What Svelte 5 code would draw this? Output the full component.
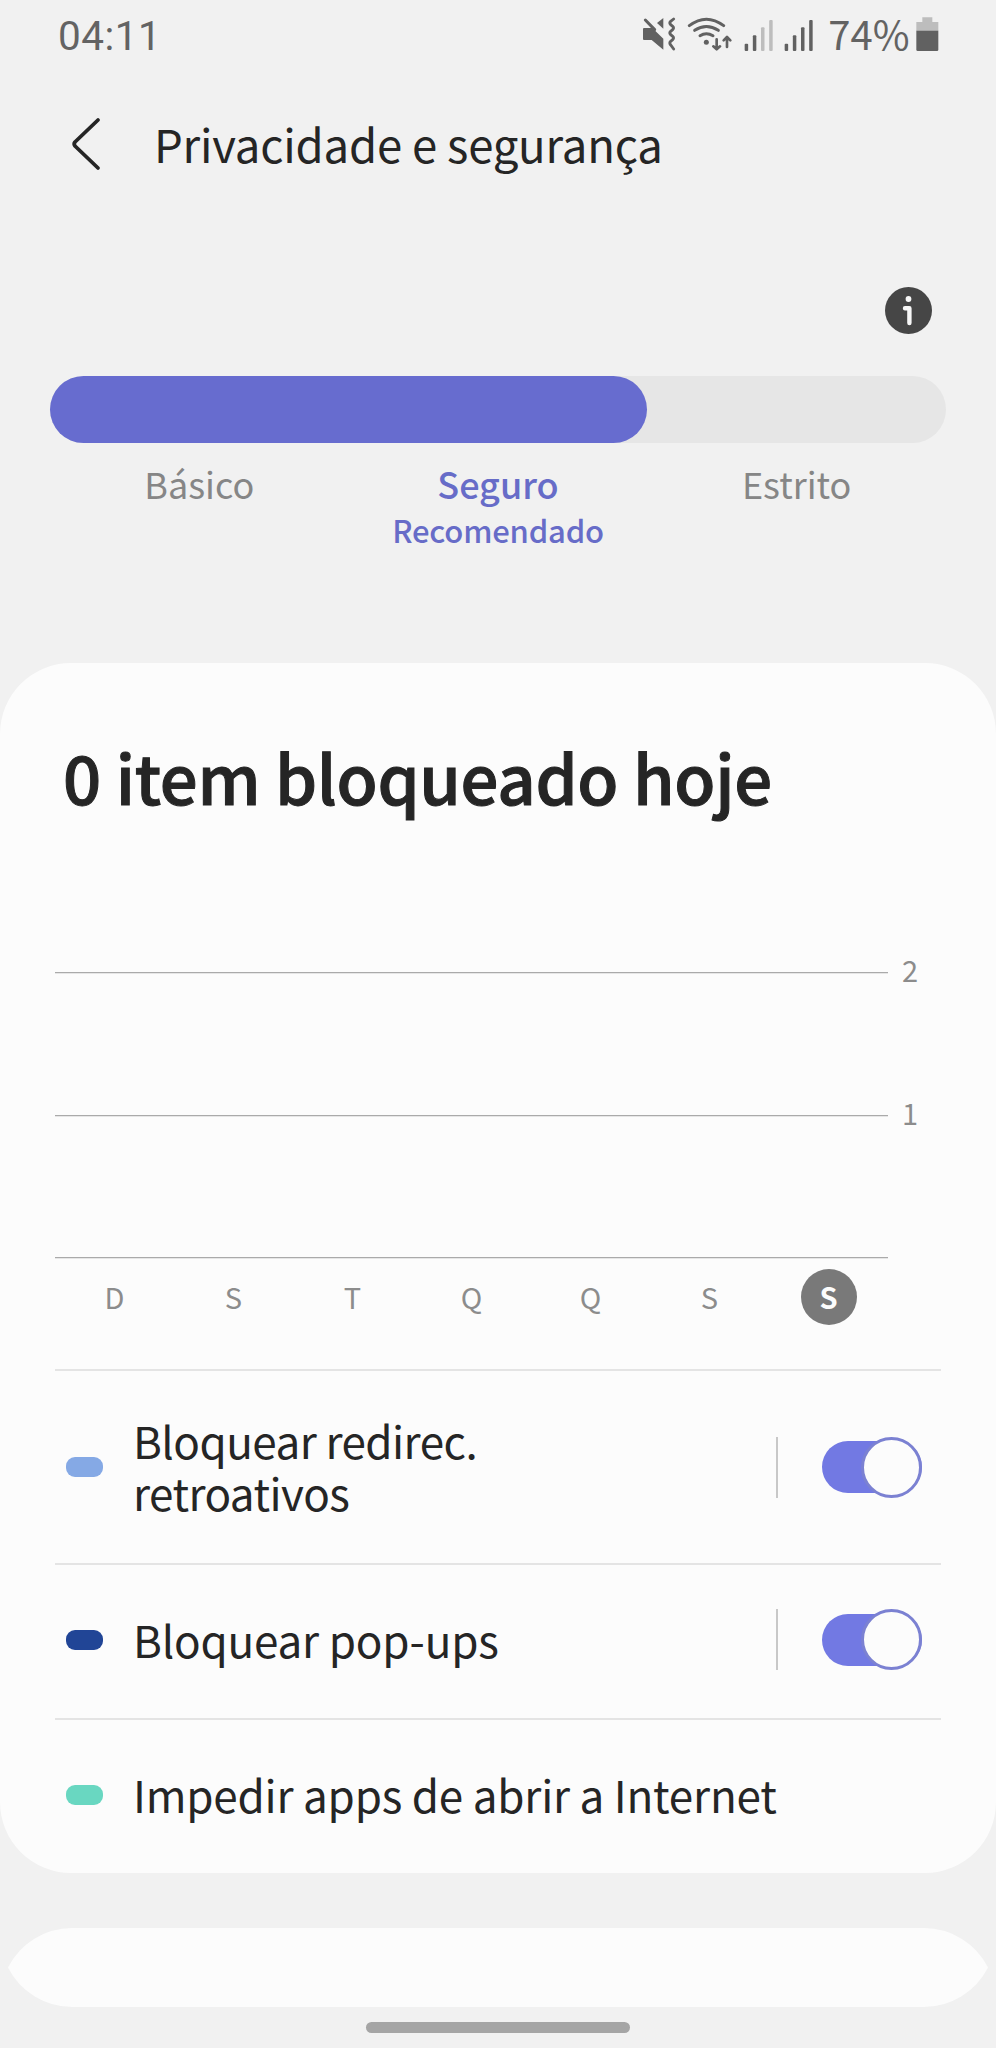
<script lang="ts">
  interface BlockRule {
    id: string;
    lines: string[];
    color: string;
    toggle: boolean;
  }

  const levels = [
    { name: "Básico", hint: "" },
    { name: "Seguro", hint: "Recomendado" },
    { name: "Estrito", hint: "" },
  ];
  const days = ["D", "S", "T", "Q", "Q", "S", "S"];
  const today = 6;

  const rules: BlockRule[] = [
    { id: "redirects", lines: ["Bloquear redirec.", "retroativos"], color: "#85a9e5", toggle: true },
    { id: "popups", lines: ["Bloquear pop-ups"], color: "#214596", toggle: true },
    { id: "apps", lines: ["Impedir apps de abrir a Internet"], color: "#69d7c1", toggle: false },
  ];

  let level = $state(1);
  let blocked = $state(0);
  let enabled: Record<string, boolean> = $state({ redirects: true, popups: true });

  const fill = $derived(((level + 1) / levels.length) * 100);
</script>

{#snippet signal(strength: number)}
  <svg class="status-icon" width="29.33" height="35.33" viewBox="370 48 88 106">
    {#each [131, 106, 82, 60] as top, i}
      <rect x={372 + i * 24.5} y={top} width="10.5" height={153 - top} rx="3" fill={i < strength ? "#616161" : "#bdbdbd"} />
    {/each}
  </svg>
{/snippet}

<div class="screen">
  <div class="status-bar">
    <span class="clock">04:11</span>
    <div class="status-icons">
      <svg class="status-icon" width="34" height="35.33" viewBox="66 48 102 106">
        <path d="M72 84H97L130 116V149L95 120H72Q69 120 69 117V87Q69 84 72 84Z" fill="#616161" />
        <path d="M130 54V86L111 69Z" fill="#616161" />
        <path d="M76 60L104 89" stroke="#616161" stroke-width="9" stroke-linecap="round" />
        <path
          d="M161 57L152 64Q147 69 152 74L158 79Q163 84 158 89L152 94Q147 99 152 104L158 109Q163 114 158 119L152 124Q147 129 152 135L161 147"
          fill="none"
          stroke="#616161"
          stroke-width="8.5"
          stroke-linecap="round"
        />
      </svg>
      <svg class="status-icon" width="45.33" height="35.33" viewBox="202 48 136 106">
        <g fill="none" stroke="#616161" stroke-width="9" stroke-linecap="round" stroke-linejoin="round">
          <path d="M209 77Q260 38 312 77" />
          <path d="M225 91Q260 68 296 91" />
          <path d="M241 107Q260 95 280 107" />
          <path d="M291 118V147M281 139L291 148L301 139" stroke-width="8" />
          <path d="M322 141V111M312 121L322 111L332 121" stroke-width="8" />
        </g>
        <circle cx="260" cy="127" r="7.5" fill="#616161" />
      </svg>
      {@render signal(2)}
      {@render signal(4)}
      <span class="percent">74%</span>
      <svg width="22.67" height="35.33" viewBox="890 48 68 106">
        <path d="M909 52H939V66H957V93H891V66H909Z" fill="#bdbdbd" />
        <path d="M891 92H957V149Q957 153 953 153H895Q891 153 891 149Z" fill="#616161" />
      </svg>
    </div>
  </div>

  <header class="app-bar">
    <button class="back" aria-label="Voltar">
      <svg width="32" height="54" viewBox="0 0 32 54">
        <path d="M28 3L5 25Q3.4 27 5 29L28 51" fill="none" />
      </svg>
    </button>
    <h1>Privacidade e segurança</h1>
  </header>

  <section class="level">
    <button class="info" aria-label="Informações">
      <svg width="47" height="47" viewBox="0 0 47 47">
        <circle cx="23.5" cy="23.5" r="23.5" fill="#464646" />
        <circle cx="23.5" cy="12" r="2.9" fill="#f7f7f7" />
        <path d="M20 21.2H24.4V36" fill="none" stroke="#f7f7f7" stroke-width="4.4" stroke-linecap="round" stroke-linejoin="round" />
      </svg>
    </button>
    <div class="track">
      <div class="track-fill" style="width: {fill}%"></div>
    </div>
    <div class="level-names">
      {#each levels as item, i}
        <button class="level-name" class:active={level === i} onclick={() => (level = i)}>
          <span>{item.name}</span>
          {#if item.hint}
            <small>{item.hint}</small>
          {/if}
        </button>
      {/each}
    </div>
  </section>

  <section class="card">
    <h2>{blocked} item bloqueado hoje</h2>

    <div class="chart">
      {#each [2, 1] as value}
        <div class="grid-row">
          <div class="grid-line"></div>
          <span class="grid-value">{value}</span>
        </div>
      {/each}
      <div class="grid-line base"></div>
      <div class="days">
        {#each days as day, i}
          <span class="day" class:today={i === today}>{day}</span>
        {/each}
      </div>
    </div>

    {#each rules as rule (rule.id)}
      <div class="rule" class:tall={rule.lines.length > 1}>
        <span class="swatch" style="background: {rule.color}"></span>
        <div class="rule-name">
          {#each rule.lines as line}
            <div>{line}</div>
          {/each}
        </div>
        {#if rule.toggle}
          <span class="separator"></span>
          <button
            class="switch"
            class:on={enabled[rule.id]}
            role="switch"
            aria-checked={enabled[rule.id]}
            aria-label={rule.lines.join(" ")}
            onclick={() => (enabled[rule.id] = !enabled[rule.id])}
          >
            <span class="knob"></span>
          </button>
        {/if}
      </div>
    {/each}
  </section>

  <svg class="next-card" width="996" height="79" viewBox="0 0 996 79">
    <path d="M8 39.5A72 72 0 0 1 72 0H924A72 72 0 0 1 988 39.5A72 72 0 0 1 924 79H72A72 72 0 0 1 8 39.5Z" />
  </svg>

  <div class="home-handle"></div>
</div>

<style>
  :global(body) {
    background: #f1f1f1;
  }

  .screen {
    width: 996px;
    height: 2048px;
    overflow: hidden;
    background: #f1f1f1;
    color: #252525;
    font-family: "Noto Sans CJK JP", "Noto Sans", sans-serif;
  }

  button {
    display: block;
    margin: 0;
    padding: 0;
    border: none;
    background: none;
    color: inherit;
    font: inherit;
    cursor: pointer;
  }

  svg {
    display: block;
  }

  .status-bar {
    height: 67px;
    padding: 0 57px 0 58px;
    display: flex;
    align-items: center;
    justify-content: space-between;
    color: #636363;
    font-size: 40px;
    line-height: 48px;
  }

  .clock {
    padding-top: 5px;
    font-family: Roboto, sans-serif;
    font-size: 40.5px;
    letter-spacing: 0.5px;
  }

  .status-icons {
    display: flex;
    align-items: center;
  }

  .status-icon {
    margin-right: 11px;
  }

  .percent {
    width: 88px;
    margin-left: 4px;
    padding-bottom: 2px;
  }

  .app-bar {
    height: 154px;
    padding-left: 70px;
    display: flex;
    align-items: center;
  }

  .back path {
    stroke: #252525;
    stroke-width: 3.8;
    stroke-linecap: round;
    stroke-linejoin: round;
  }

  h1 {
    margin: 0 0 3px 52px;
    font-size: 45.5px;
    line-height: 60px;
    font-weight: 400;
    letter-spacing: -0.2px;
  }

  .level {
    height: 442px;
    box-sizing: border-box;
    padding: 66px 50px 0;
  }

  .info {
    margin: 0 14px 42px auto;
  }

  .track {
    height: 66.5px;
    border-radius: 34px;
    background: #e6e6e6;
  }

  .track-fill {
    height: 100%;
    border-radius: 34px;
    background: #676ccf;
  }

  .level-names {
    display: grid;
    grid-template-columns: repeat(3, 1fr);
    align-items: start;
    padding-top: 16.5px;
  }

  .level-name {
    color: #868686;
    font-size: 36px;
    line-height: 48px;
    text-align: center;
  }

  .level-name.active {
    color: #676cc8;
    font-weight: 500;
  }

  .level-name span,
  .level-name small {
    display: block;
  }

  .level-name small {
    margin-top: 2px;
    font-size: 31px;
    line-height: 42px;
    letter-spacing: -0.2px;
  }

  .card {
    height: 1210px;
    box-sizing: border-box;
    padding: 68px 55px 0;
    border-radius: 71px;
    background: #fcfcfc;
  }

  h2 {
    margin: 0 0 0 8px;
    font-size: 67px;
    line-height: 90px;
    font-weight: 500;
    letter-spacing: -0.3px;
    white-space: nowrap;
    -webkit-text-stroke: 1px #252525;
  }

  .chart {
    height: 548px;
    box-sizing: border-box;
    padding-top: 131px;
    color: #8c8c8c;
    font-size: 29px;
    line-height: 40px;
  }

  .grid-row {
    height: 41px;
    margin-bottom: 102px;
    display: flex;
    align-items: center;
  }

  .grid-line {
    width: 833px;
    height: 1px;
    background: #aaaaaa;
    box-shadow: 0 1px #e6e6e6;
  }

  .grid-line.base {
    margin-top: 121px;
  }

  .grid-value {
    width: 44px;
    padding-bottom: 7px;
    text-align: center;
  }

  .days {
    width: 833px;
    margin-top: 11px;
    display: grid;
    grid-template-columns: repeat(7, 1fr);
    justify-items: center;
  }

  .day {
    width: 56px;
    height: 56px;
    border-radius: 50%;
    line-height: 55px;
    text-align: center;
  }

  .day.today {
    background: #797979;
    color: #fcfcfc;
    font-weight: 700;
  }

  .rule {
    height: 155px;
    box-sizing: border-box;
    border-top: 2px solid #e4e4e4;
    padding: 0 19px 4px 11px;
    display: flex;
    align-items: center;
  }

  .rule.tall {
    height: 194px;
    padding-bottom: 0;
  }

  .swatch {
    width: 37px;
    height: 20px;
    border-radius: 9px;
  }

  .rule-name {
    flex: 1;
    padding-bottom: 1px;
    margin-left: 30px;
    font-size: 44px;
    line-height: 52px;
    letter-spacing: -0.2px;
    white-space: nowrap;
  }

  .rule.tall .rule-name {
    padding-bottom: 3px;
    letter-spacing: -0.55px;
  }

  .separator {
    width: 2px;
    height: 61px;
    margin-right: 44px;
    background: #c8c8c8;
  }

  .switch {
    width: 100px;
    height: 52px;
    display: flex;
    align-items: center;
    border-radius: 30px;
    background: #a8a8a8;
  }

  .switch.on {
    justify-content: flex-end;
    background: #7279e3;
  }

  .knob {
    flex: none;
    width: 61px;
    height: 61px;
    box-sizing: border-box;
    border: 3px solid #7b81d2;
    border-radius: 50%;
    background: #fcfcfc;
  }

  .next-card {
    margin-top: 55px;
  }

  .next-card path {
    fill: #fcfcfc;
  }

  .home-handle {
    width: 264px;
    height: 11px;
    margin: 15px auto 0;
    border-radius: 6px;
    background: #a5a5a5;
  }
</style>
